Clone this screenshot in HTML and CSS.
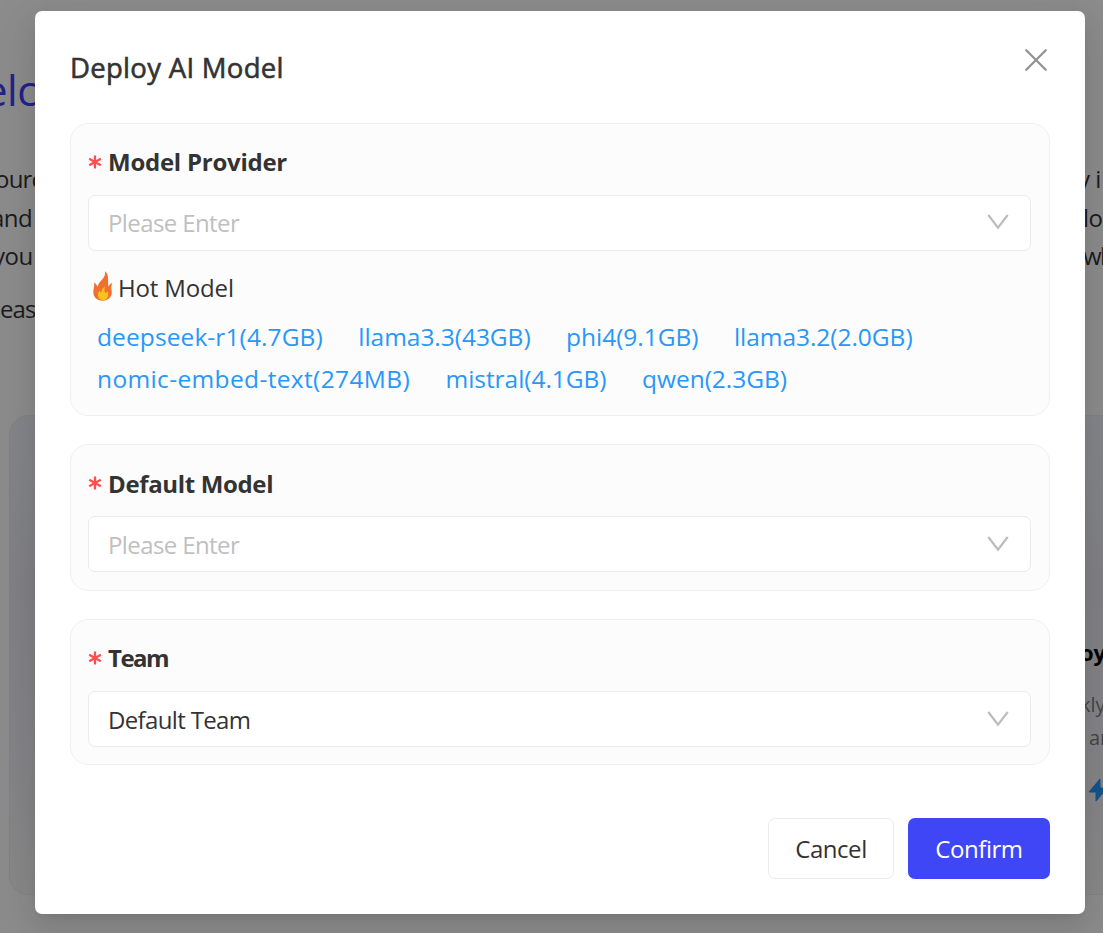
FILE: index.html
```html
<!DOCTYPE html>
<html lang="en">
<head>
<meta charset="utf-8">
<title>Deploy AI Model</title>
<link rel="stylesheet" href="styles.css">
</head>
<body>
<div class="page">
  <h1 class="welcome"><span class="lead">elco</span></h1>
  <div class="line"><span class="lead lead-our">ource</span><span class="tail tail-y">y i</span></div>
  <div class="line"><span class="lead lead-and">and</span><span class="tail tail-lo">lo</span></div>
  <div class="line"><span class="lead lead-you">you</span><span class="tail tail-wh">wh</span></div>
  <div class="line line-last"><span class="lead">eas</span></div>
  <div class="tiles">
    <div class="tile"></div>
    <div class="tile tile-right">
      <b class="tile-title">oy</b>
      <span class="tile-text">kly</span>
      <span class="tile-text tile-text-2">an</span>
      <svg class="bolt" viewBox="0 0 20 24"><path d="M12 1 1 14h7v9L19 10h-7z" fill="#13548c" stroke="#13548c" stroke-linejoin="round"/></svg>
    </div>
  </div>
</div>
<div class="overlay">
  <main class="modal">
    <header class="head">
      <h2 class="title">Deploy AI Model</h2>
      <svg class="close" viewBox="0 0 22 22"><path d="M1.300 1.300 20.700 20.700M20.700 1.300 1.300 20.700"/></svg>
    </header>
    <section class="card card-provider">
      <div class="label"><svg class="star" viewBox="0 0 14 14"><path d="M7 .5v13M1.200 3.800l11.600 6.400M12.800 3.800 1.200 10.200"/></svg><span class="l-provider">Model Provider</span></div>
      <div class="select"><span class="placeholder">Please Enter</span><svg class="chev" viewBox="0 0 22 16"><path d="M1.300 1 11 13.700 20.700 1"/></svg></div>
      <div class="hot">
        <svg class="fire" viewBox="0 0 20 30"><path d="M12 .3c.6 4.500-1.500 6.800-4.200 9.700C6.200 11.800 5 13.500 4.700 15.800 3.700 14.500 3.300 12.800 1 11.200c.7 3.200-.2 5.500-.6 8.300C-.4 25.300 3.500 29.700 9.500 29.700c6.200 0 9.900-4.300 9.200-9.700-.4-3.300-.8-5.600.8-8.300-2.200.7-3.300 2.200-3.600 4.100-1.300-2.700-.6-4.700-.8-8.200C15 4.300 14 1.800 12 .3z" fill="#f0702f"/><path d="M12 15.200c-1.200 1-3.800 2.800-3.400 6.300-1-.3-1.600-1-1.700-2-1.200 1.300-2 2.800-2 4.500 0 2.800 2 5 5 5 3.100 0 5.100-2 5.100-4.800 0-1.300-.1-2.400.2-3.800-1.100.2-1.800.8-2.300 1.800-1.700-1.600-1.900-4-.9-7z" fill="#fcc21b"/></svg>
        <span>Hot Model</span>
      </div>
      <div class="links">
        <a class="wide">deepseek-r1(4.7GB)</a><a>llama3.3(43GB)</a><a>phi4(9.1GB)</a><a>llama3.2(2.0GB)</a>
      </div>
      <div class="links">
        <a class="wider">nomic-embed-text(274MB)</a><a>mistral(4.1GB)</a><a>qwen(2.3GB)</a>
      </div>
    </section>
    <section class="card card-short">
      <div class="label"><svg class="star" viewBox="0 0 14 14"><path d="M7 .5v13M1.200 3.800l11.600 6.400M12.800 3.800 1.200 10.200"/></svg><span class="l-default">Default Model</span></div>
      <div class="select"><span class="placeholder">Please Enter</span><svg class="chev" viewBox="0 0 22 16"><path d="M1.300 1 11 13.700 20.700 1"/></svg></div>
    </section>
    <section class="card card-team">
      <div class="label"><svg class="star" viewBox="0 0 14 14"><path d="M7 .5v13M1.200 3.800l11.600 6.400M12.800 3.800 1.200 10.200"/></svg><span class="l-team">Team</span></div>
      <div class="select"><span class="value">Default Team</span><svg class="chev" viewBox="0 0 22 16"><path d="M1.300 1 11 13.700 20.700 1"/></svg></div>
    </section>
    <footer class="foot">
      <button class="btn cancel">Cancel</button>
      <button class="btn confirm">Confirm</button>
    </footer>
  </main>
</div>
</body>
</html>
```
FILE: styles.css
```css
* { box-sizing: border-box; }
body { margin: 0; width: 1103px; height: 933px; overflow: hidden; background: #8c8c8c; color: #1c1c1c; font-family: "Open Sans", "Noto Sans", sans-serif; font-size: 24px; }
.page { width: 1103px; height: 933px; padding-top: 60px; overflow: hidden; }
.welcome { margin: 0 0 40px; height: 60px; line-height: 60px; font-size: 42px; font-weight: 400; color: #22228a; letter-spacing: -.5px; }
.welcome .lead { margin-left: -16px; }
.line { display: flex; height: 38.5px; line-height: 38px; white-space: nowrap; letter-spacing: -.5px; }
.lead { flex: none; width: 60px; }
.lead-our { margin-left: -5px; letter-spacing: -.8px; }
.lead-and { margin-left: -9px; }
.lead-you { margin-left: -7px; }
.tail { flex: none; }
.tail-y { margin-left: 1023px; }
.tail-lo { margin-left: 1032px; }
.tail-wh { margin-left: 1030px; letter-spacing: -1.5px; }
.line-last { margin-top: 14px; letter-spacing: -.9px; }
.tiles { display: flex; justify-content: space-between; margin-top: 86.500px; padding-left: 9px; }
.tile { width: 340px; height: 480px; border: 1px solid #828282; border-radius: 20px; background: linear-gradient(180deg, #85868b 0%, #818186 35%, #858588 75%, #898989 100%); }
.tile-right { display: flex; flex-direction: column; width: 340px; margin-right: -40px; padding: 219px 0 0 276px; overflow: hidden; }
.tile-title { height: 34px; line-height: 34px; font-size: 22px; color: #000; }
.tile-text { height: 34px; margin-top: 19px; line-height: 34px; font-size: 20px; color: #454545; }
.tile-text-2 { margin: -1px 0 0 9px; }
.bolt { width: 20px; height: 24px; margin: 23px 0 0 8px; }

.overlay { position: absolute; left: 0; top: 0; width: 1103px; height: 933px; padding: 11px 18px 19px 35px; }
.modal { width: 1050px; height: 903px; padding: 35px; border-radius: 7px; background: #fff; color: #333; box-shadow: 0 10px 28px rgba(0,0,0,.08), 0 5px 10px -7px rgba(0,0,0,.12), 0 16px 49px 14px rgba(0,0,0,.05); }
.head { display: flex; justify-content: space-between; height: 77px; }
.title { margin: 2px 0 0; height: 40px; line-height: 40px; font-size: 27.5px; font-weight: 500; letter-spacing: .3px; -webkit-text-stroke: .6px #333; }
.close { width: 22px; height: 22px; margin: 3px 3px 0 0; }
.close path { fill: none; stroke: #929292; stroke-width: 2.3; stroke-linecap: round; }
.card { padding: 20px 18px 0 17px; border: 1px solid #f0f0f0; border-radius: 18px; background: #fcfcfc; }
.card-provider { height: 293px; }
.card-short { height: 147px; margin-top: 28px; }
.card-team { height: 146px; margin-top: 28px; }
.label { display: flex; align-items: center; gap: 6px; height: 36px; margin-bottom: 15px; font-weight: 700; letter-spacing: -.25px; }
.card-provider .label span, .card-team .label span { margin-top: -2px; }
.l-default { letter-spacing: -.35px; }
.l-team { letter-spacing: -1.5px; }
.star { width: 14px; height: 14px; }
.star path { fill: none; stroke: #ff4d4f; stroke-width: 2.3; }
.select { display: flex; align-items: center; justify-content: space-between; height: 56px; padding: 0 21px 2px 19px; border: 1px solid #ebebeb; border-radius: 7px; background: #fff; }
.card-short .select, .card-team .select { padding-bottom: 0; }
.placeholder { color: #bfbfbf; letter-spacing: -.6px; }
.value { letter-spacing: -.65px; }
.chev { width: 22px; height: 16px; }
.chev path { fill: none; stroke: #bcbcbc; stroke-width: 2.2; }
.hot { display: flex; align-items: center; height: 36px; margin: 19px 0 14px 5px; gap: 5px; }
.hot span { margin-top: -2px; letter-spacing: -.15px; }
.fire { width: 20px; height: 30px; margin-top: -4px; }
.links { display: flex; gap: 35.5px; height: 42px; padding-left: 9px; line-height: 34px; color: #2997f7; font-size: 24.5px; letter-spacing: -.04px; white-space: nowrap; }
.wide { letter-spacing: .1px; }
.wider { letter-spacing: .36px; }
.foot { display: flex; justify-content: flex-end; gap: 14px; margin-top: 53px; }
.btn { height: 61px; padding: 0; border-radius: 7px; font: 400 24px "Open Sans", "Noto Sans", sans-serif; letter-spacing: -.45px; }
.cancel { width: 126px; border: 1px solid #ebebeb; background: #fff; color: #333; }
.confirm { width: 142px; border: 0; background: #3f46f5; color: #fff; }
```
